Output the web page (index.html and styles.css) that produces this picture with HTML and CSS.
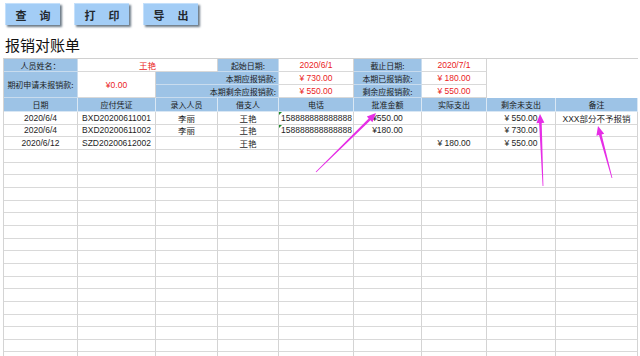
FILE: index.html
```html
<!DOCTYPE html>
<html lang="zh-CN">
<head>
<meta charset="utf-8">
<title>报销对账单</title>
<link rel="stylesheet" href="styles.css">
</head>
<body>
<div class="toolbar">
  <div class="btn"><span>查</span><span>询</span></div>
  <div class="btn"><span>打</span><span>印</span></div>
  <div class="btn"><span>导</span><span>出</span></div>
</div>
<h1 class="title">报销对账单</h1>
<div class="sheet">
  <div class="lab">人员姓名：</div><div class="val span2">王艳</div><div class="lab">起始日期:</div><div class="val">2020/6/1</div><div class="lab">截止日期:</div><div class="val">2020/7/1</div><div class="blank span2"></div>
  <div class="lab rs2">期初申请未报销款:</div><div class="val rs2">¥0.00</div><div class="lab span2 right">本期应报销款:</div><div class="val">¥ 730.00</div><div class="lab">本期已报销款:</div><div class="val">¥ 180.00</div><div class="blank span2"></div>
  <div class="lab span2 right">本期剩余应报销款:</div><div class="val">¥ 550.00</div><div class="lab">剩余应报销款:</div><div class="val">¥ 550.00</div><div class="blank span2"></div>

  <div class="hd">日期</div><div class="hd">应付凭证</div><div class="hd">录入人员</div><div class="hd">借支人</div><div class="hd">电话</div><div class="hd">批准金额</div><div class="hd">实际支出</div><div class="hd">剩余未支出</div><div class="hd">备注</div>

  <div class="td">2020/6/4</div><div class="td">BXD20200611001</div><div class="td">李丽</div><div class="td">王艳</div><div class="td phone">158888888888888</div><div class="td">¥550.00</div><div class="td"></div><div class="td">¥ 550.00</div><div class="td">XXX部分不予报销</div>
  <div class="td">2020/6/4</div><div class="td">BXD20200611002</div><div class="td">李丽</div><div class="td">王艳</div><div class="td phone">158888888888888</div><div class="td">¥180.00</div><div class="td"></div><div class="td">¥ 730.00</div><div class="td"></div>
  <div class="td">2020/6/12</div><div class="td">SZD20200612002</div><div class="td"></div><div class="td">王艳</div><div class="td"></div><div class="td"></div><div class="td">¥ 180.00</div><div class="td">¥ 550.00</div><div class="td"></div>

  <i></i><i></i><i></i><i></i><i></i><i></i><i></i><i></i><i></i>
  <i></i><i></i><i></i><i></i><i></i><i></i><i></i><i></i><i></i>
  <i></i><i></i><i></i><i></i><i></i><i></i><i></i><i></i><i></i>
  <i></i><i></i><i></i><i></i><i></i><i></i><i></i><i></i><i></i>
  <i></i><i></i><i></i><i></i><i></i><i></i><i></i><i></i><i></i>
  <i></i><i></i><i></i><i></i><i></i><i></i><i></i><i></i><i></i>
  <i></i><i></i><i></i><i></i><i></i><i></i><i></i><i></i><i></i>
  <i></i><i></i><i></i><i></i><i></i><i></i><i></i><i></i><i></i>
  <i></i><i></i><i></i><i></i><i></i><i></i><i></i><i></i><i></i>
  <i></i><i></i><i></i><i></i><i></i><i></i><i></i><i></i><i></i>
  <i></i><i></i><i></i><i></i><i></i><i></i><i></i><i></i><i></i>
  <i></i><i></i><i></i><i></i><i></i><i></i><i></i><i></i><i></i>
  <i></i><i></i><i></i><i></i><i></i><i></i><i></i><i></i><i></i>
  <i></i><i></i><i></i><i></i><i></i><i></i><i></i><i></i><i></i>
  <i></i><i></i><i></i><i></i><i></i><i></i><i></i><i></i><i></i>
  <i></i><i></i><i></i><i></i><i></i><i></i><i></i><i></i><i></i>
  <i></i><i></i><i></i><i></i><i></i><i></i><i></i><i></i><i></i>
</div>
<svg class="arrows" width="640" height="356" viewBox="0 0 640 356">
  <polygon points="316.3,172.3 370.5,120.2 372.4,122.2 376,113 366.8,116.4 368.7,118.4 315.7,171.7"/>
  <polygon points="543.4,186 541.7,122.9 544.4,122.8 540,114 536.4,123.2 539.1,123.1 542.6,186"/>
  <polygon points="612.4,177.9 601.6,134.4 604.2,133.7 598,126 596.4,135.7 599,135 611.6,178.1"/>
</svg>
</body>
</html>
```

FILE: styles.css
```css
html, body {
  margin: 0;
  padding: 0;
  background: #ffffff;
}
body {
  width: 640px;
  height: 356px;
  overflow: hidden;
  position: relative;
  font-family: "Liberation Sans", "Noto Sans CJK SC", sans-serif;
  color: #1e1e1e;
}
.toolbar {
  display: flex;
  gap: 14px;
  padding: 3px 0 0 5px;
  height: 28px;
  box-sizing: border-box;
}
.btn {
  width: 55px;
  height: 22px;
  background: #a3cdf6;
  border-top: 1px solid #c4e0fb;
  border-left: 1px solid #c4e0fb;
  box-sizing: border-box;
  box-shadow: 2px 2px 2px #6d7b88;
  display: flex;
  align-items: center;
  justify-content: center;
  gap: 13px;
  font-family: "Noto Sans CJK SC", sans-serif;
  font-weight: bold;
  font-size: 11px;
  color: #23292f;
}
.title {
  margin: 0;
  height: 30px;
  padding-left: 5px;
  font-family: "Noto Sans CJK SC", sans-serif;
  font-weight: normal;
  font-size: 15px;
  line-height: 34px;
  color: #111;
}
.sheet {
  margin-left: 3px;
  width: 635px;
  box-sizing: border-box;
  display: grid;
  grid-template-columns: 74px 78px 62px 61px 75px 68px 65px 69px 82px;
  grid-template-rows: 13px 13px 13px 14px;
  grid-auto-rows: 12.67px;
  border-top: 1px solid #d0d0d0;
  border-left: 1px solid #d4d4d4;
}
.sheet > * {
  box-sizing: border-box;
  border-right: 1px solid #d4d4d4;
  border-bottom: 1px solid #d9d9d9;
  display: flex;
  align-items: center;
  justify-content: center;
  white-space: nowrap;
  overflow: visible;
  font-size: 8.5px;
  position: relative;
}
.lab {
  background: #9dc3e6;
  font-family: "Noto Sans CJK SC", sans-serif;
  font-size: 8px !important;
  border-color: #c9dcee !important;
  color: #1a1a1a;
}
.val {
  color: #ea1c24;
}
.blank {
  border-color: transparent !important;
}
.span2 { grid-column: span 2; }
.rs2 { grid-row: span 2; }
.right {
  justify-content: flex-end !important;
  padding-right: 2px;
}
.hd {
  background: #9dc3e6;
  border-color: #d9e7f4 !important;
  font-family: "Noto Sans CJK SC", sans-serif;
  font-size: 8px !important;
  color: #1a1a1a;
}
.td {
  color: #1e1e1e;
}
.phone {
  justify-content: flex-start !important;
  padding-left: 2px;
}
.phone::before {
  content: "";
  position: absolute;
  left: 0;
  top: 0;
  border-top: 3px solid #1d8a2a;
  border-right: 3px solid transparent;
}
.arrows {
  position: absolute;
  left: 0;
  top: 0;
  pointer-events: none;
  fill: #e62ee6;
}
```
